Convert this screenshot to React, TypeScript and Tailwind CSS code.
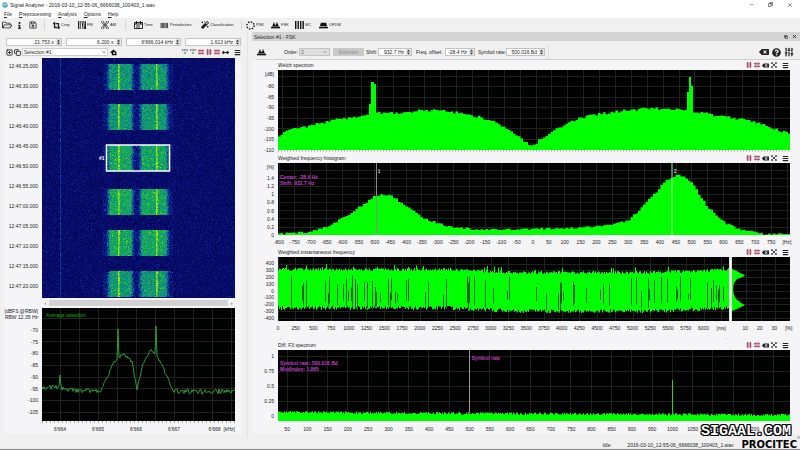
import type { ReactNode } from "react";
import { FaBackspace, FaCropAlt, FaInfo, FaMagic, FaQuestionCircle, FaRegFolderOpen, FaRegSave } from "react-icons/fa";
import { Copy, Menu, MoveHorizontal, SlidersVertical, SquarePlus, X, Minus } from "lucide-react";

type Point = [number, number];

// small deterministic generator so every render draws the same noise
function createRandom(seed: number) {
  let s = seed;
  return () => {
    s = (s * 1664525 + 1013904223) % 4294967296;
    return s / 4294967296;
  };
}

function valueAt(points: Point[], x: number) {
  for (let i = 1; i < points.length; i++) {
    const [x0, y0] = points[i - 1];
    const [x1, y1] = points[i];
    if (x <= x1) return y0 + ((y1 - y0) * (x - x0)) / (x1 - x0);
  }
  return points[points.length - 1][1];
}

function barsPath(points: Point[], width: number, height: number, step: number, noise: number, seed: number) {
  const random = createRandom(seed);
  let d = `M0 ${height}`;
  for (let x = 0; x < width; x += step) {
    const y = valueAt(points, x + step / 2) + (random() - 0.5) * noise;
    d += `L${x.toFixed(1)} ${y.toFixed(1)}H${Math.min(width, x + step).toFixed(1)}`;
  }
  return d + `V${height}Z`;
}

function linesPath(xs: number[], ys: number[], width: number, height: number) {
  return xs.map((x) => `M${x} 0V${height}`).join("") + ys.map((y) => `M0 ${y}H${width}`).join("");
}

function range(start: number, step: number, count: number) {
  return Array.from({ length: count }, (_, i) => start + step * i);
}

const welchPoints: Point[] = [
  [0, 68], [8, 62], [15, 58], [22, 58], [39, 54], [55, 50], [72, 48], [90, 44], [100, 43],
  [120, 43], [140, 41], [155, 40], [172, 42], [189, 44], [205, 48], [214, 50], [227, 58],
  [238, 65], [249, 73], [256, 75], [264, 68], [280, 58], [297, 50], [314, 45], [335, 42],
  [350, 40], [372, 38], [403, 40], [420, 42], [447, 47], [465, 49], [480, 53], [495, 58], [512, 64],
];

const histogramPoints: Point[] = [
  [0, 71], [16, 70], [32, 69], [49, 64], [72, 51], [89, 39], [99, 32], [112, 32], [129, 43],
  [145, 55], [160, 60], [172, 64], [205, 67], [252, 66], [300, 65], [330, 62], [350, 58],
  [364, 45], [380, 27], [390, 16], [400, 12], [407, 14], [414, 20], [430, 44], [447, 60],
  [464, 67], [487, 71], [512, 71],
];

const averagePoints: Point[] = [
  [0, 80], [16, 79], [32, 82], [58, 84], [65, 70], [71, 56], [76, 50], [81, 46], [86, 49],
  [90, 54], [95, 81], [101, 56], [109, 42], [114, 47], [120, 57], [131, 83], [160, 84], [193, 83],
];

const blockRows = [6, 46, 87, 131, 172, 213];
const spectrogramColors = [
  "#05065a", "#070d6c", "#0a177e", "#0c288e", "#0e4498", "#0f6a96",
  "#108888", "#109c70", "#12aa58", "#22ba40", "#58cc2a", "#b8e01c",
];

function buildSpectrogram() {
  const random = createRandom(77);
  const paths = spectrogramColors.map(() => "");
  for (let y = 0; y < 240; y++) {
    for (let x = 0; x < 193; x++) {
      let level = 0.2 + random() * 2 + (random() > 0.93 ? 1.5 : 0);
      if (x === 18) level += 2.6;
      const row = blockRows.findIndex((top) => y >= top && y < top + 26);
      if (row >= 0) {
        const edge = Math.max(Math.min(x - 64, 92 - x), Math.min(x - 96, 127 - x));
        if (edge >= 0) {
          const strength = Math.min(1, (edge + 1) / 5);
          level += strength * (row >= 2 && row < 5 ? 6.9 : 6.1) + (random() - 0.5) * 2.8;
          if (x === 76 || x === 114) level = 10 + random() * 2;
          if (x === 115 || x === 77) level = 9 + random() * 2.6;
        } else if (x > 60 && x < 131) {
          level += random() * 2.2;
        }
      }
      const index = Math.max(0, Math.min(11, Math.floor(level)));
      if (index > 0) paths[index] += `M${x} ${y}h1v1h-1z`;
    }
  }
  return paths;
}

function buildAverage() {
  const random = createRandom(5);
  let d = "";
  for (let x = 0; x <= 193; x++) {
    let y = valueAt(averagePoints, x) + (random() - 0.5) * (x > 60 && x < 130 ? 3 : 5);
    if (x === 18) y = 67;
    if (x === 76) y = 21;
    if (x === 114) y = 18;
    d += `${x ? "L" : "M"}${x} ${y.toFixed(1)}`;
  }
  return d;
}

function buildFrequencyBand() {
  const random = createRandom(31);
  let upper = "M0 32";
  let lower = "";
  let gaps = "";
  for (let x = 0; x < 451; x++) {
    const drift = valueAt([[0, 0], [170, 0], [240, 3], [380, 3], [451, 0]], x);
    const top = 14 + drift - random() * 3 - (random() > 0.96 ? 4 : 0);
    const bottom = 49 + drift + random() * 4;
    upper += `L${x} ${top.toFixed(1)}h1`;
    lower = `L${x + 1} ${bottom.toFixed(1)}h-1` + lower;
    if (x > 12 && random() > 0.82) {
      const start = 18 + random() * 20;
      gaps += `M${x + 0.5} ${start.toFixed(1)}V${(42 + random() * 12).toFixed(1)}`;
    }
  }
  return { band: upper + lower + "Z", gaps };
}

const spectrogram = buildSpectrogram();
const average = buildAverage();
const frequency = buildFrequencyBand();
const welch = barsPath(welchPoints, 512, 80, 2.5, 2.6, 12);
const histogram = barsPath(histogramPoints, 512, 72, 2.5, 2, 9);
const diffSpectrum = barsPath([[0, 62], [120, 63], [512, 65]], 512, 71, 1, 2.4, 23);

function SpinBox({ label, value, className }: { label: string; value: string; className: string }) {
  return (
    <div className={`flex h-[8px] min-w-0 items-center border border-[#c4c4c4] bg-white ${className}`}>
      <input aria-label={label} defaultValue={value} className="w-0 min-w-0 flex-1 bg-transparent pr-[2px] text-right leading-none outline-none" />
      <svg viewBox="0 0 5 6" className="h-[6px] w-[5px] shrink-0 bg-[#e4e4e4]">
        <path d="M1 2.4 2.5.7 4 2.4ZM1 3.7 2.5 5.4 4 3.7Z" fill="#222" />
      </svg>
    </div>
  );
}

function GridIcon({ tall }: { tall?: boolean }) {
  return (
    <svg viewBox="0 0 6 6" className="h-[6px] w-[6px]" fill="none">
      <path d={tall ? "M1.7 0V6M4.3 0V6" : "M0 1.8H6M0 4.2H6"} stroke="#a52a48" strokeWidth="1.1" />
      <path d={tall ? "M0 2H6M0 4H6" : "M1.8 0V6M4.2 0V6"} stroke="#b5607a" strokeWidth=".7" />
    </svg>
  );
}

function ExpandIcon() {
  return (
    <svg viewBox="0 0 8 8" className="h-[6px] w-[6px]" fill="none" stroke="#222">
      <path d="M1.5 1.5 6.5 6.5M6.5 1.5 1.5 6.5" strokeWidth="1.1" />
      <path d="M.5 2.5V.5H2.5ZM5.5.5H7.5V2.5ZM7.5 5.5V7.5H5.5ZM2.5 7.5H.5V5.5Z" fill="#222" strokeWidth=".4" />
    </svg>
  );
}

function PeaksIcon({ filled }: { filled?: boolean }) {
  return (
    <svg viewBox="0 0 10 8" className="h-[8px] w-[9px]">
      <path d={filled ? "M1 5.4 2 1.5H8L9 5.4Z" : "M1 5.6 2.5 3 3.3.5 4.1 3 5 4.4 5.9 3 6.7.5 7.5 3 9 5.6Z"} fill="#111" />
      <path d="M0 6H10V7.7H0Z" fill="#111" />
    </svg>
  );
}

function PlotHeader({ title }: { title: string }) {
  return (
    <div className="flex h-[10px] items-center justify-between pl-[26px] pr-[11px]">
      <h2>{title}</h2>
      <div className="flex items-center gap-[2px]">
        <button aria-label="Vertical cursors"><GridIcon tall /></button>
        <button aria-label="Horizontal cursors"><GridIcon /></button>
        <button aria-label="Clear"><FaBackspace size={7} /></button>
        <button aria-label="Fit view"><ExpandIcon /></button>
        <button aria-label="Plot menu" className="ml-[3px]"><Menu size={7} strokeWidth={4} /></button>
      </div>
    </div>
  );
}

function YAxis({ unit, labels, className }: { unit?: string; labels: string[]; className: string }) {
  return (
    <div className={`flex w-[26px] shrink-0 flex-col pr-[4px] text-right ${className}`}>
      {unit && <span className="h-[10px]">{unit}</span>}
      <div className="flex flex-1 flex-col">
        {labels.map((label) => (
          <span key={label} className="flex flex-1 items-center justify-end">{label}</span>
        ))}
      </div>
    </div>
  );
}

function XAxis({ labels, className }: { labels: string[]; className: string }) {
  return (
    <div className={`flex items-center ${className}`}>
      {labels.map((label) => (
        <span key={label} className="flex w-0 flex-1 justify-center whitespace-nowrap">{label}</span>
      ))}
    </div>
  );
}

function Plot({ width, height, grid, className, children }: { width: number; height: number; grid: string; className: string; children: ReactNode }) {
  return (
    <svg viewBox={`0 0 ${width} ${height}`} preserveAspectRatio="none" className={`block min-w-0 bg-black ${className}`}>
      <path d={grid} stroke="#1d241e" strokeWidth="1" fill="none" shapeRendering="crispEdges" />
      {children}
    </svg>
  );
}

function ToolButton({ label, className, children }: { label: string; className: string; children: ReactNode }) {
  return (
    <button className={`flex items-center gap-[1px] text-[4px] ${className}`}>
      {children}
      {label}
    </button>
  );
}

function TopBar() {
  return (
    <header>
      <div className="flex h-[9px] items-center bg-white pl-[2px] pr-[7px]">
        <svg viewBox="0 0 8 8" className="mr-[2px] h-[6px] w-[6px]">
          <circle cx="4" cy="4" r="3.7" fill="#39a3b8" />
          <path d="M1 5 3 2 4 5 6 1.5 7.5 4" fill="none" stroke="#e8fbff" strokeWidth=".9" />
        </svg>
        <h1 className="flex-1">Signal Analyzer - 2016-03-10_12-55-06_6666038_100403_1.wav</h1>
        <div className="flex items-center gap-[14px]">
          <button aria-label="Minimize"><Minus size={5} /></button>
          <button aria-label="Restore"><Copy size={5} strokeWidth={3} className="-scale-x-100" /></button>
          <button aria-label="Close"><X size={6} /></button>
        </div>
      </div>
      <nav className="flex h-[9px] items-center gap-[7px] bg-white pl-[4px]">
        {["File", "Preprocessing", "Analysis", "Options", "Help"].map((item) => (
          <button key={item}><span className="underline">{item[0]}</span>{item.slice(1)}</button>
        ))}
      </nav>
      <div className="flex h-[14px] items-center pl-[2px]">
        <button aria-label="Open"><FaRegFolderOpen size={10} /></button>
        <button aria-label="Info" className="ml-[4px]"><FaInfo size={7} /></button>
        <button aria-label="Save" className="ml-[6px]"><FaRegSave size={8} /></button>
        <div className="ml-[7px] h-[10px] w-px bg-[#d5d5d5]" />
        <ToolButton label="Crop" className="ml-[8px] w-[25px]"><FaCropAlt size={7} /></ToolButton>
        <ToolButton label="FM" className="w-[23px]">
          <svg viewBox="0 0 8 8" className="h-[8px] w-[8px]" stroke="#111" fill="none"><path d="M.5 0V8M2.2 0V8M4 0 5 8M5.7 0 6.7 8M7.5 0V8" strokeWidth=".9" /></svg>
        </ToolButton>
        <ToolButton label="AM" className="w-[24px]">
          <svg viewBox="0 0 8 8" className="h-[8px] w-[8px]" stroke="#222" fill="none"><path d="M.5 0C.5 3 3 3 3 4S.5 5 .5 8M7.5 0C7.5 3 5 3 5 4S7.5 5 7.5 8M2.5 0C2.5 3 5.5 5 5.5 8M5.5 0C5.5 3 2.5 5 2.5 8" strokeWidth=".8" /></svg>
        </ToolButton>
        <div className="mr-[8px] h-[10px] w-px bg-[#d5d5d5]" />
        <ToolButton label="Time" className="w-[26px]">
          <svg viewBox="0 0 9 8" className="h-[8px] w-[9px]" fill="none" stroke="#111"><path d="M.5 1.5H8.5V7.5H.5ZM.5 3H8.5M2.5 0V3M6.5 0V3M3 4V7M5 4V7" strokeWidth=".9" /></svg>
        </ToolButton>
        <ToolButton label="Periodicities" className="w-[41px]">
          <svg viewBox="0 0 9 8" className="h-[7px] w-[9px]" stroke="#111"><path d="M.5 1V7M2 1V7M3.5 1V7M5 1V7M6.5 1V7M8 1V7" strokeWidth=".9" /></svg>
        </ToolButton>
        <ToolButton label="Classification" className="w-[36px]"><FaMagic size={8} /></ToolButton>
        <div className="mx-[4px] h-[10px] w-px bg-[#d5d5d5]" />
        <ToolButton label="PSK" className="w-[25px]">
          <svg viewBox="0 0 9 9" className="h-[9px] w-[9px]" fill="none"><circle cx="4.5" cy="4.5" r="3.6" stroke="#111" strokeWidth="1.5" strokeDasharray="1.4 1.4" /></svg>
        </ToolButton>
        <ToolButton label="FSK" className="w-[24px]"><PeaksIcon /></ToolButton>
        <ToolButton label="MC" className="w-[24px]">
          <svg viewBox="0 0 9 8" className="h-[8px] w-[9px]" stroke="#111"><path d="M.7 0V8M3.2 0V8M5.7 0V8M8.2 0V8" strokeWidth="1.4" /></svg>
        </ToolButton>
        <ToolButton label="OFDM" className=""><PeaksIcon filled /></ToolButton>
      </div>
    </header>
  );
}

function LeftPanel() {
  return (
    <section className="w-[248px] shrink-0 border-r border-[#e4e4e4] pl-[4px] pr-[6px] pt-[6px]">
      <div className="flex gap-[4px] pl-[2px]">
        <SpinBox label="Start time" value="21.753 s" className="flex-1" />
        <SpinBox label="Duration" value="6.200 s" className="flex-1" />
        <SpinBox label="Center frequency" value="6'666.014 kHz" className="flex-1" />
        <SpinBox label="Bandwidth" value="1.613 kHz" className="flex-1" />
      </div>
      <div className="mt-[2px] flex h-[8px] items-center">
        <button aria-label="Add selection" className="ml-[2px]"><SquarePlus size={7} strokeWidth={3} /></button>
        <button aria-label="Copy selection" className="ml-px"><Copy size={7} strokeWidth={3} /></button>
        <div className="ml-px flex h-[8px] w-[86px] items-center border border-[#cfcfcf] bg-white">
          <select aria-label="Selection" className="flex-1 appearance-none pl-px outline-none">
            <option>Selection #1</option>
          </select>
          <svg viewBox="0 0 4 3" className="mr-px h-[3px] w-[4px]" fill="none" stroke="#444"><path d="M.5.5 2 2 3.5.5" strokeWidth=".6" /></svg>
        </div>
        <button aria-label="Erase" className="ml-[2px]">
          <svg viewBox="0 0 7 7" className="h-[7px] w-[7px]"><path d="M0 3.6 3.4.5 6.5 3V6.3H1.8V4Z" fill="#111" /><path d="M3.4 3.3h1.7v1.6H3.4z" fill="#fff" /></svg>
        </button>
        <div className="ml-auto flex items-center gap-[2px]">
          {["Upper marker", "Lower marker"].map((label) => (
            <button key={label} aria-label={label}>
              <svg viewBox="0 0 6 6" className="h-[6px] w-[6px]" fill="none"><path d="M0 1H6" stroke="#222" strokeDasharray="1.4 .8" /><path d="M3 2.5V5M2 3.5 3 5 4 3.5" stroke="#4c9a4c" strokeWidth=".7" /></svg>
            </button>
          ))}
          <button aria-label="Cross cursors"><GridIcon /></button>
          <button aria-label="Vertical cursors"><GridIcon tall /></button>
          <button aria-label="Horizontal cursors"><GridIcon /></button>
          <button aria-label="Fit width"><MoveHorizontal size={7} strokeWidth={4} /></button>
          <button aria-label="Plot menu" className="ml-[3px]"><Menu size={7} strokeWidth={4} /></button>
        </div>
      </div>

      <div className="mt-[2px] bg-[#f5f5f8]">
        <div className="flex pr-[6px]">
          <div className="w-[38px] shrink-0 pr-[4px] text-right leading-[17px]">
            {range(0, 1, 12).map((i) => {
              const seconds = 25 + i * 5;
              return (
                <div key={i} className="h-[20px] whitespace-nowrap">
                  12:{seconds < 60 ? 46 : 47}:{String(seconds % 60).padStart(2, "0")}.000
                </div>
              );
            })}
          </div>
          <svg viewBox="0 0 193 240" preserveAspectRatio="none" className="block h-[240px] min-w-0 flex-1 bg-[#05065a]">
            <g shapeRendering="crispEdges">
              {spectrogram.map((d, i) => (
                <path key={spectrogramColors[i]} d={d} fill={spectrogramColors[i]} />
              ))}
            </g>
            <rect x="64.5" y="87" width="63" height="26" fill="none" stroke="#fff" strokeWidth="1.5" />
            <text x="57" y="102" fill="#fff" fontSize="5" fontWeight="bold">#1</text>
          </svg>
        </div>
        <div className="ml-[38px] mr-[6px] mt-px flex h-[8px] items-center justify-between">
          <button aria-label="Scroll left" className="w-[7px]">‹</button>
          <div className="h-[6px] flex-1 bg-[#d2d2d2]" />
          <button aria-label="Scroll right" className="w-[7px]">›</button>
        </div>
        <div className="mt-px flex pr-[6px]">
          <div className="flex w-[38px] shrink-0 flex-col items-end whitespace-nowrap pb-[3px] pr-[4px]">
            <span className="h-[6px]">[dBFS @RBW]</span>
            <span className="h-[10px]">RBW 12.35 Hz</span>
            {range(-70, -5, 8).map((value) => (
              <span key={value} className="flex flex-1 items-center">{value}</span>
            ))}
          </div>
          <div className="relative min-w-0 flex-1">
            <Plot width={193} height={113} grid={linesPath(range(18.5, 19, 10), range(10, 11.8, 9), 193, 113)} className="h-[113px] w-full">
              <path d={average} fill="none" stroke="#34a83c" strokeWidth=".9" />
            </Plot>
            <span className="absolute left-[4px] top-[4px] text-[#12b21a]">Average selection</span>
          </div>
        </div>
        <div className="ml-[38px] mr-[6px] h-[2px] bg-[repeating-linear-gradient(to_right,#aaa_0_1px,transparent_1px_4px)]" />
        <div className="flex h-[11px] items-center pl-[37px] pr-[6px]">
          {["6'664", "6'665", "6'666", "6'667"].map((label) => (
            <span key={label} className="w-[38px] shrink-0 text-center">{label}</span>
          ))}
          <span className="ml-auto flex gap-[3px]"><span>6'668</span><span>[kHz]</span></span>
        </div>
      </div>
    </section>
  );
}

const frequencyLabels = [...range(-800, 50, 32).map(String), "[Hz]"];
const timeLabels = [...range(0, 250, 25).map(String), "[ms]"];
const rateLabels = range(50, 50, 25).map(String);

function RightPanel() {
  return (
    <section className="min-w-0 flex-1 pl-[4px]">
      <div className="flex h-[9px] items-center gap-[4px] bg-[#d4d4d4] pl-[2px] pr-[3px]">
        <h2 className="flex-1">Selection #1 - FSK</h2>
        <button aria-label="Float panel"><Copy size={4} strokeWidth={4} /></button>
        <button aria-label="Close panel"><X size={5} strokeWidth={4} /></button>
      </div>
      <div className="ml-[4px] flex h-[19px] items-center border-b border-[#cfcfcf] pr-[6px] pt-[4px]">
        <div className="w-[28px] pl-px"><PeaksIcon /></div>
        <label htmlFor="order" className="w-[15px]">Order:</label>
        <div className="flex h-[8px] w-[31px] items-center border border-[#c4c4c4] bg-[#dedede]">
          <select id="order" className="flex-1 appearance-none pl-px text-[#666] outline-none">
            <option>2</option>
          </select>
          <svg viewBox="0 0 4 3" className="mr-[2px] h-[3px] w-[4px]" fill="none" stroke="#777"><path d="M.5.5 2 2 3.5.5" strokeWidth=".6" /></svg>
        </div>
        <button disabled className="ml-[3px] h-[8px] w-[31px] bg-[#c9c9c9] text-[#909090]">Estimate</button>
        <span className="ml-[2px] w-[12px]">Shift:</span>
        <SpinBox label="Shift" value="932.7 Hz" className="w-[34px]" />
        <span className="ml-[4px] w-[29px] whitespace-nowrap">Freq. offset:</span>
        <SpinBox label="Freq. offset" value="-28.4 Hz" className="w-[30px]" />
        <span className="ml-[3px] w-[28px] whitespace-nowrap">Symbol rate:</span>
        <SpinBox label="Symbol rate" value="500.016 Bd" className="w-[39px]" />
        <div className="ml-[3px] h-full w-px bg-[#dcdcdc]" />
        <div className="ml-auto flex items-center gap-[3px]">
          <button aria-label="Clear all"><FaBackspace size={10} /></button>
          <button aria-label="Help"><FaQuestionCircle size={9} /></button>
          <button aria-label="Settings"><SlidersVertical size={10} strokeWidth={3} /></button>
        </div>
      </div>

      <div className="bg-[#f5f5f7]">
        <PlotHeader title="Welch spectrum" />
        <div className="flex pr-[10px]">
          <YAxis unit="[dB]" labels={range(-80, -5, 7).map(String)} className="-mb-[5px] h-[85px] pt-px" />
          <Plot width={512} height={80} grid={linesPath(range(4, 15.88, 33), range(6, 10.5, 8), 512, 80)} className="h-[80px] flex-1">
            <path d={welch} fill="#00ff00" />
            <path d="M91 80V34H93V12H96V14H98V80ZM409 80V22H411V7H413V16H415V80Z" fill="#00ff00" />
          </Plot>
        </div>
        <div className="ml-[26px] mr-[10px] h-[3px] bg-[repeating-linear-gradient(to_right,#b9c9b9_0_1px,transparent_1px_3px)] bg-[length:100%_2px] bg-no-repeat" />

        <PlotHeader title="Weighted frequency histogram" />
        <div className="flex pr-[10px]">
          <YAxis unit="[%]" labels={["1.4", "1.2", "1", "0.8", "0.6", "0.4", "0.2", "0"]} className="-mb-[4px] h-[76px] pt-px" />
          <div className="relative min-w-0 flex-1">
            <Plot width={512} height={72} grid={linesPath(range(1, 15.88, 33), range(7, 8.15, 8), 512, 72)} className="h-[72px] w-full">
              <path d={histogram} fill="#00ff00" />
              <path d="M98.5 0V72" stroke="#958295" />
              <path d="M394 0V72" stroke="#a9ef9c" />
            </Plot>
            <div className="absolute left-[2px] top-[11px] font-bold leading-[6px] text-[#c43cc9]">
              Center: -28.4 Hz<br />Shift: 932.7 Hz
            </div>
            <span className="absolute left-[19.5%] top-[5px] text-white">1</span>
            <span className="absolute left-[77.3%] top-[5px] text-white">2</span>
          </div>
        </div>
        <XAxis labels={frequencyLabels} className="h-[12px] pl-[19px] pr-[5px] pt-[2px]" />

        <PlotHeader title="Weighted instantaneous frequency" />
        <div className="flex pr-[10px]">
          <YAxis labels={range(400, -100, 9).map(String)} className="h-[64px] pt-[3px]" />
          <Plot width={451} height={64} grid={linesPath(range(0, 17.75, 26), range(7, 6.83, 9), 451, 64)} className="h-[64px] flex-1">
            <path d={frequency.band} fill="#00ff00" />
            <path d={frequency.gaps} stroke="#033a05" strokeWidth=".8" />
          </Plot>
          <div className="w-[3px] border-x border-[#d8e8d8] bg-white" />
          <Plot width={58} height={64} grid={linesPath([14, 29, 43], range(7, 6.83, 9), 58, 64)} className="h-[64px] w-[58px] shrink-0">
            <path d="M0 12 5 14 8 16 13 18 11 20 5 22 2 26 1 32 2 38 4 42 9 46 13 48 9 50 5 52 0 54Z" fill="#00ff00" />
          </Plot>
        </div>
        <div className="flex h-[14px] items-center pl-[17px] pr-[4px]">
          <XAxis labels={timeLabels} className="min-w-0 flex-1" />
          <XAxis labels={["10", "20", "30", "[%]"]} className="ml-[8px] w-[58px] shrink-0" />
        </div>

        <div className="flex h-[5px] items-start justify-between pl-[28px] pr-[73px] text-[#bbb]"><span>‹</span><span>›</span></div>
        <PlotHeader title="Diff. F3 spectrum" />
        <div className="flex pr-[10px]">
          <YAxis labels={["1", "0.75", "0.5", "0.25", "0"]} className="-mt-[2px] h-[75px]" />
          <div className="relative min-w-0 flex-1">
            <Plot width={512} height={71} grid={linesPath(range(9, 20.28, 25), range(6, 15, 5), 512, 71)} className="h-[71px] w-full">
              <path d={diffSpectrum} fill="#00ff00" />
              <path d="M191.5 0V63" stroke="#999" />
              <path d="M394.5 30V66" stroke="#28d52e" />
            </Plot>
            <div className="absolute left-[2px] top-[10px] font-bold leading-[6px] text-[#c43cc9]">
              Symbol rate: 500.016 Bd<br />ModIndex: 1.865
            </div>
            <span className="absolute left-[37.8%] top-[5px] font-bold text-[#c43cc9]">Symbol rate</span>
          </div>
        </div>
        <XAxis labels={rateLabels} className="-mt-[2px] h-[13px] pl-[25px] pr-[16px] pt-[2px]" />
      </div>
    </section>
  );
}

export default function App() {
  return (
    <div className="relative flex min-h-screen flex-col bg-[#f0f0f0] font-['Liberation_Sans',Arial,sans-serif] text-[5px] leading-[6px] text-[#222]">
      <TopBar />
      <main className="flex flex-1">
        <LeftPanel />
        <RightPanel />
      </main>
      <footer className="flex h-[12px] items-end justify-end border-b border-[#888]">
        <span className="mr-[17px] pb-px">Idle</span>
        <span className="mr-[8px] pb-px">2016-03-10_12-55-06_6666038_100403_1.wav</span>
        <span className="font-['DejaVu_Sans',sans-serif] text-[10px] font-bold leading-[9px] text-black">PROCITEC</span>
        <sup className="top-0 self-start text-[4px]">®</sup>
      </footer>
      <div className="absolute bottom-[11px] right-[9px] font-['Liberation_Mono',monospace] text-[15px] font-bold leading-[14px] text-white [text-shadow:1px_0_#000,-1px_0_#000,0_1px_#000,0_-1px_#000,1px_1px_#000,-1px_-1px_#000,1px_-1px_#000,-1px_1px_#000]">
        SIGAAL.COM
      </div>
    </div>
  );
}
